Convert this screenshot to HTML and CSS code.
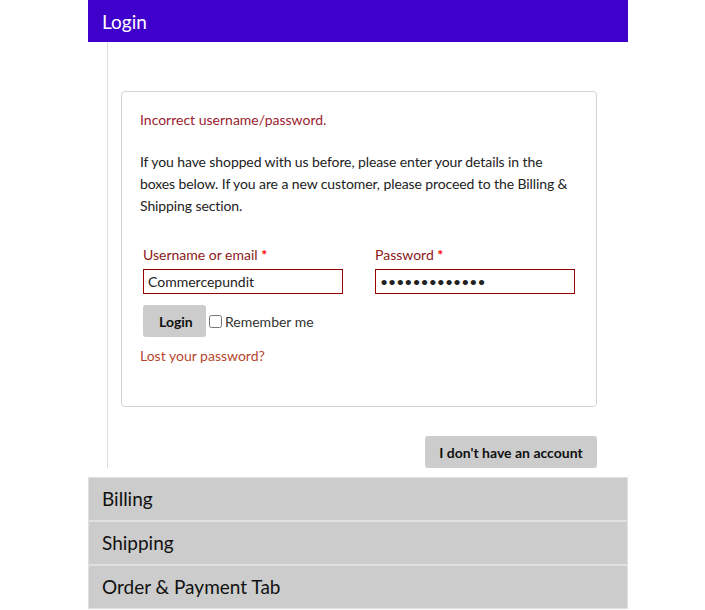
FILE: index.html
```html
<!DOCTYPE html>
<html>
<head>
<meta charset="utf-8">
<link rel="stylesheet" href="styles.css">
</head>
<body>
<div class="checkout">
  <div class="tab-head active">Login</div>
  <div class="tab-body">
    <div class="login-box">
      <p class="error">Incorrect username/password.</p>
      <p class="intro">If you have shopped with us before, please enter your details in the boxes below. If you are a new customer, please proceed to the Billing &amp; Shipping section.</p>
      <div class="fields">
        <div class="field">
          <label>Username or email <span class="req">*</span></label>
          <input class="input" type="text" value="Commercepundit">
        </div>
        <div class="field">
          <label>Password <span class="req">*</span></label>
          <input class="input pw" type="password" value="commercepundi">
        </div>
      </div>
      <div class="actions">
        <button class="btn">Login</button>
        <label class="remember"><input type="checkbox" class="check"> Remember me</label>
      </div>
      <a class="lost" href="#">Lost your password?</a>
    </div>
    <div class="no-account">
      <button class="btn btn-wide">I don't have an account</button>
    </div>
  </div>
  <div class="tabs">
    <div class="tab">Billing</div>
    <div class="tab">Shipping</div>
    <div class="tab">Order &amp; Payment Tab</div>
  </div>
</div>
</body>
</html>
```
FILE: styles.css
```css
* { box-sizing: border-box; }
body {
  margin: 0;
  font-family: Lato, "Open Sans", sans-serif;
  font-size: 14px;
  color: #333;
  background: #fff;
}
.checkout {
  width: 540px;
  margin-left: 88px;
}
.tab-head {
  height: 42px;
  line-height: 44px;
  padding-left: 14px;
  background: #4000cc;
  color: #fff;
  font-size: 19px;
}
.tab-body {
  margin-left: 19px;
  border-left: 1px solid #ddd;
  padding: 49px 31px 0 13px;
}
.login-box {
  border: 1px solid #d4d4d4;
  border-radius: 4px;
  padding: 17px 18px 38px;
  height: 316px;
}
.error {
  margin: 0;
  line-height: 22px;
  color: #9b1c31;
}
.intro {
  margin: 20px 0 0;
  line-height: 22px;
  color: #222;
  letter-spacing: -0.1px;
}
.fields {
  display: grid;
  grid-template-columns: 200px 200px;
  column-gap: 32px;
  margin: 28px 0 0 3px;
}
.field label {
  display: block;
  line-height: 20px;
  color: #8b1a1a;
}
.req { color: #f00; font-weight: bold; }
.input {
  display: block;
  margin-top: 4px;
  width: 200px;
  height: 25px;
  border: 1px solid #990000;
  padding: 0 4px;
  font-family: inherit;
  font-size: 14px;
  color: #222;
  outline: none;
}
.pw { font-size: 14px; letter-spacing: 0; }
.actions {
  display: flex;
  align-items: center;
  margin: 11px 0 0 3px;
}
.btn {
  height: 32px;
  border: none;
  border-radius: 3px;
  background: #ccc;
  font-family: inherit;
  font-size: 14px;
  font-weight: bold;
  color: #111;
  padding: 0 16px;
  width: 63px;
}
.remember {
  display: flex;
  align-items: center;
  color: #333;
}
.check {
  margin: 0 3px 0 3px;
  width: 13px;
  height: 13px;
}
.lost {
  display: block;
  margin-top: 9px;
  line-height: 20px;
  color: #b5472f;
  text-decoration: none;
}
.no-account {
  display: flex;
  justify-content: flex-end;
  margin-top: 29px;
}
.btn-wide {
  width: 172px;
  padding: 0;
}
.tabs {
  margin-top: 9px;
}
.tab {
  height: 44px;
  line-height: 42px;
  border: 1px solid #e0e0e0;
  background: #ccc;
  padding-left: 13px;
  font-size: 19px;
  color: #111;
}
```
